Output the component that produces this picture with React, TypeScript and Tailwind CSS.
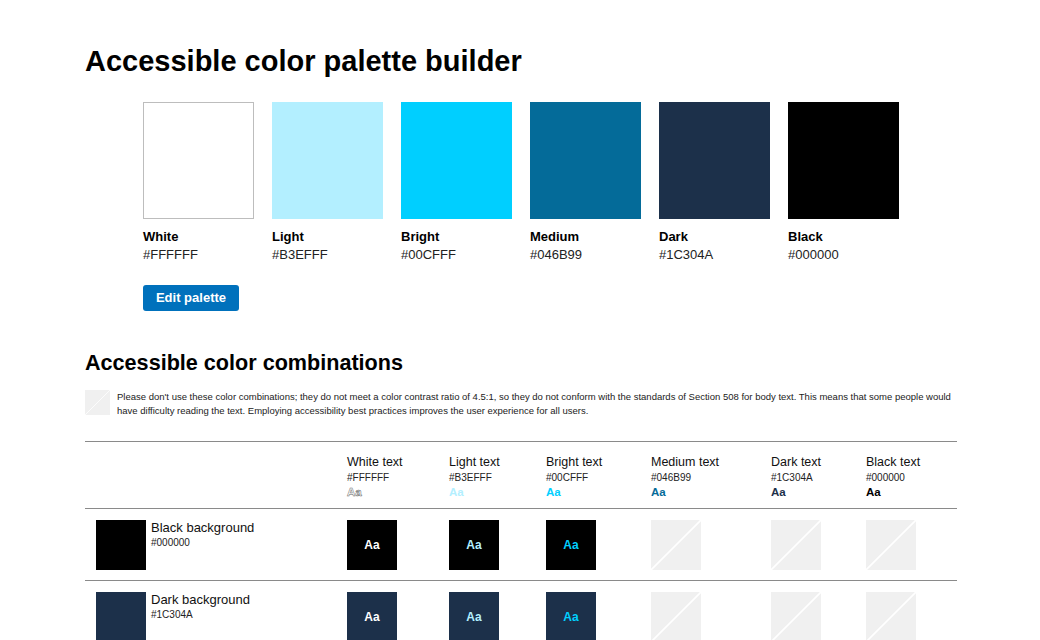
import React from "react";

type Swatch = { name: string; hex: string };

const palette: Swatch[] = [
  { name: "White", hex: "#FFFFFF" },
  { name: "Light", hex: "#B3EFFF" },
  { name: "Bright", hex: "#00CFFF" },
  { name: "Medium", hex: "#046B99" },
  { name: "Dark", hex: "#1C304A" },
  { name: "Black", hex: "#000000" },
];

// widths of the table columns, measured off the layout
const colWidths = ["w-[262px]", "w-[102px]", "w-[97px]", "w-[105px]", "w-[120px]", "w-[95px]", "w-[91px]"];

// which text colours pass on which background
const passes: Record<string, string[]> = {
  "#000000": ["#FFFFFF", "#B3EFFF", "#00CFFF"],
  "#1C304A": ["#FFFFFF", "#B3EFFF", "#00CFFF"],
};

const rows = [
  { name: "Black", hex: "#000000" },
  { name: "Dark", hex: "#1C304A" },
];

const Blocked = ({ size }: { size: string }) => (
  <div className={`${size} relative bg-[#f0f0f0] overflow-hidden`}>
    <svg className="absolute inset-0 w-full h-full" viewBox="0 0 50 50" preserveAspectRatio="none">
      <line x1="0" y1="50" x2="50" y2="0" stroke="#ffffff" strokeWidth="1.6" />
    </svg>
  </div>
);

export default function App() {
  return (
    <div className="min-h-[640px] bg-white text-black font-['Liberation_Sans',Arial,sans-serif] pl-[85px] pt-[41px]">
      <h1 className="text-[29px] leading-[40px] font-bold">Accessible color palette builder</h1>

      <div className="ml-[58px] mt-[21px]">
        <div className="flex gap-[18px]">
          {palette.map((s) => (
            <div key={s.hex} className="w-[111px]">
              <div
                className={`h-[117px] w-[111px] ${s.hex === "#FFFFFF" ? "border border-[#bdbdbd]" : ""}`}
                style={{ backgroundColor: s.hex }}
              />
              <div className="mt-[9px] text-[13px] leading-[18px] font-bold">{s.name}</div>
              <div className="text-[13px] leading-[18px] text-[#222]">{s.hex}</div>
            </div>
          ))}
        </div>
        <button className="mt-[21px] h-[26px] w-[96px] rounded-[3px] bg-[#0071bc] text-white text-[13px] font-bold">
          Edit palette
        </button>
      </div>

      <h2 className="mt-[38px] text-[21.6px] leading-[28px] font-bold">Accessible color combinations</h2>

      <div className="mt-[12px] flex items-start gap-[7px] w-[872px]">
        <div className="shrink-0 mt-[1px]">
          <Blocked size="w-[25px] h-[25px]" />
        </div>
        <p className="text-[9.5px] leading-[14px] text-[#222] pt-[1px]">
          Please don't use these color combinations; they do not meet a color contrast ratio of 4.5:1, so they do not conform with the standards of Section 508 for body text. This means that some people would have difficulty reading the text. Employing accessibility best practices improves the user experience for all users.
        </p>
      </div>

      <div className="mt-[23px] w-[872px] border-t border-[#8a8a8a]">
        <div className="flex border-b border-[#8a8a8a] pt-[12px] pb-[9px]">
          <div className={colWidths[0]} />
          {palette.map((s, i) => (
            <div key={s.hex} className={colWidths[i + 1]}>
              <div className="text-[12.5px] leading-[16px] text-[#111]">{s.name} text</div>
              <div className="text-[10px] leading-[15px] text-[#222]">{s.hex}</div>
              <div
                className={`text-[11.5px] leading-[14px] font-bold ${s.hex === "#FFFFFF" ? "[-webkit-text-stroke:0.5px_#666]" : ""}`}
                style={{ color: s.hex }}
              >
                Aa
              </div>
            </div>
          ))}
        </div>

        {rows.map((r) => (
          <div key={r.hex} className="flex border-b border-[#8a8a8a] pt-[11px] pb-[10px]">
            <div className={`${colWidths[0]} flex pl-[11px]`}>
              <div className="w-[50px] h-[50px]" style={{ backgroundColor: r.hex }} />
              <div className="ml-[5px]">
                <div className="text-[13px] leading-[16px] text-[#111]">{r.name} background</div>
                <div className="text-[10px] leading-[14px] text-[#222]">{r.hex}</div>
              </div>
            </div>
            {palette.map((s, i) =>
              passes[r.hex].includes(s.hex) ? (
                <div key={s.hex} className={colWidths[i + 1]}>
                  <div
                    className="w-[50px] h-[50px] flex items-center justify-center text-[12px] font-bold"
                    style={{ backgroundColor: r.hex, color: s.hex }}
                  >
                    Aa
                  </div>
                </div>
              ) : (
                <div key={s.hex} className={colWidths[i + 1]}>
                  <Blocked size="w-[50px] h-[50px]" />
                </div>
              )
            )}
          </div>
        ))}
      </div>
    </div>
  );
}
